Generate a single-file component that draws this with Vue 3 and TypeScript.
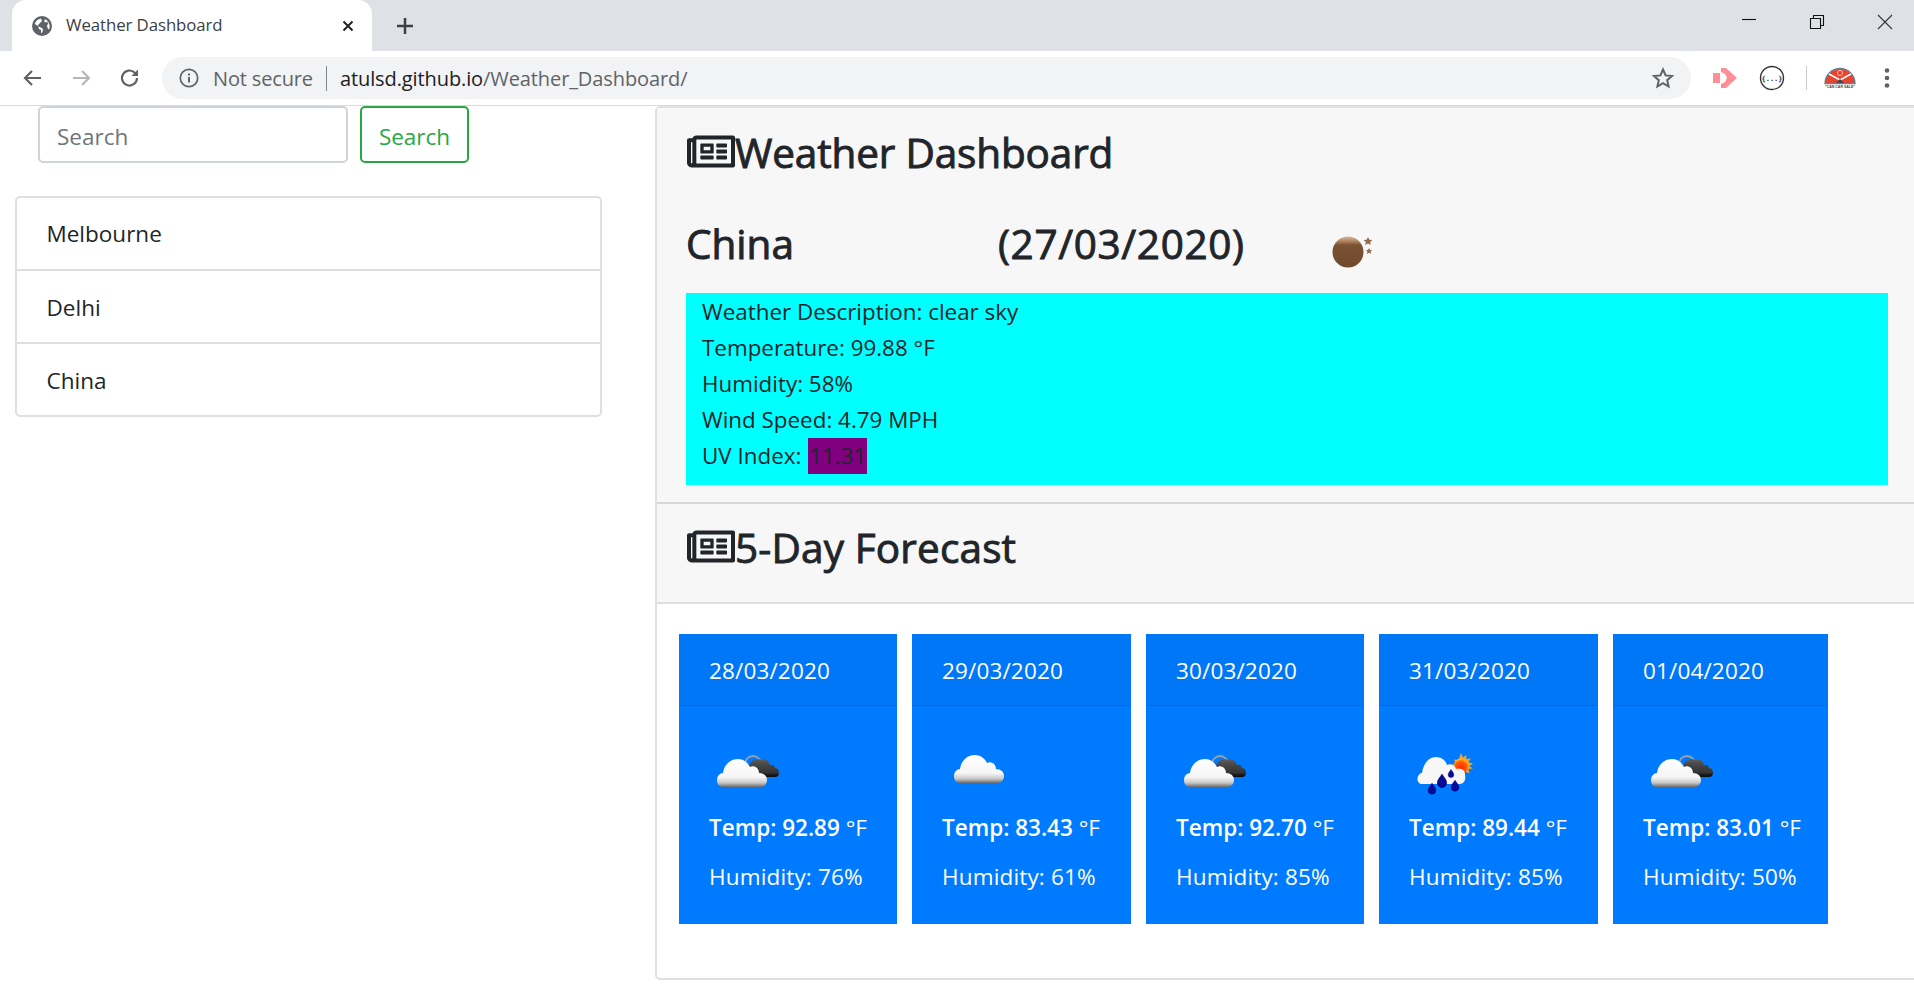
<script setup lang="ts">
interface Day { date: string; temp: string; hum: string; icon: 'broken' | 'cloud' | 'rain'; w: number }
const days: Day[] = [
  { date: '28/03/2020', temp: '92.89', hum: '76', icon: 'broken', w: 218 },
  { date: '29/03/2020', temp: '83.43', hum: '61', icon: 'cloud', w: 219 },
  { date: '30/03/2020', temp: '92.70', hum: '85', icon: 'broken', w: 218 },
  { date: '31/03/2020', temp: '89.44', hum: '85', icon: 'rain', w: 219 },
  { date: '01/04/2020', temp: '83.01', hum: '50', icon: 'broken', w: 215 },
]
const cities: string[] = ['Melbourne', 'Delhi', 'China']
const news = 'M552 64H112c-20.858 0-38.643 13.377-45.248 32H24c-13.255 0-24 10.745-24 24v272c0 30.928 25.072 56 56 56h496c13.255 0 24-10.745 24-24V88c0-13.255-10.745-24-24-24zM48 392V144h16v248c0 4.411-3.589 8-8 8s-8-3.589-8-8zm480 8H111.422c.374-2.614.578-5.283.578-8V112h416v288zM172 280h136c6.627 0 12-5.373 12-12v-96c0-6.627-5.373-12-12-12H172c-6.627 0-12 5.373-12 12v96c0 6.627 5.373 12 12 12zm28-80h80v40h-80v-40zm-40 140v-24c0-6.627 5.373-12 12-12h136c6.627 0 12 5.373 12 12v24c0 6.627-5.373 12-12 12H172c-6.627 0-12-5.373-12-12zm192 0v-24c0-6.627 5.373-12 12-12h104c6.627 0 12 5.373 12 12v24c0 6.627-5.373 12-12 12H364c-6.627 0-12-5.373-12-12zm0-144v-24c0-6.627 5.373-12 12-12h104c6.627 0 12 5.373 12 12v24c0 6.627-5.373 12-12 12H364c-6.627 0-12-5.373-12-12zm0 72v-24c0-6.627 5.373-12 12-12h104c6.627 0 12 5.373 12 12v24c0 6.627-5.373 12-12 12H364c-6.627 0-12-5.373-12-12z'
const cloud = 'M14 51C10 51 8 48 8 44C8 40 11 37 14 37C15 29 21 23 29 23C35 23 39 27 41 31C45 29 50 32 50 37C55 37 58 40 58 44C58 48 55 51 52 51Z'
const dark = 'M40 41C37 38 37 31 41 28C43 23 49 22 52 24C56 22 60 25 61 29C64 28 66 30 66 32C69 32 70 35 70 37C70 40 68 41 66 41Z'
const drop = 'M0-5C2-2 4 0 4 2.500A4 4 0 0 1-4 2.500C-4 0-2-2 0-5Z'
</script>

<template>
  <div class="screen">
    <svg class="defs" width="0" height="0" aria-hidden="true">
      <defs>
        <linearGradient id="white" x1="0" y1="0" x2="0" y2="1">
          <stop offset="0" stop-color="#ffffff" /><stop offset=".65" stop-color="#f6f6f6" />
          <stop offset=".85" stop-color="#c8c8c8" /><stop offset="1" stop-color="#6c6c6c" />
        </linearGradient>
        <linearGradient id="dark" x1="0" y1="0" x2="0" y2="1">
          <stop offset="0" stop-color="#5e5e5e" /><stop offset=".3" stop-color="#484848" />
          <stop offset=".75" stop-color="#343434" /><stop offset="1" stop-color="#050505" />
        </linearGradient>
        <radialGradient id="sun" cx=".5" cy=".6" r=".55">
          <stop offset="0" stop-color="#ff2a00" /><stop offset=".7" stop-color="#ff5a00" /><stop offset="1" stop-color="#ffb020" />
        </radialGradient>
        <linearGradient id="brown" x1="0" y1="0" x2="0" y2="1">
          <stop offset="0" stop-color="#d9b79c" /><stop offset=".14" stop-color="#b28865" />
          <stop offset=".28" stop-color="#7b5232" /><stop offset="1" stop-color="#6e4a2c" />
        </linearGradient>
        <filter id="soft"><feGaussianBlur stdDeviation=".45" /></filter>
      </defs>
    </svg>

    <header class="tabstrip">
      <div class="tab">
        <svg class="globe" viewBox="0 0 20 20" width="20" height="20">
          <circle cx="10" cy="10" r="10" fill="#5f6368" />
          <path d="M9 2.500C6 3 3.500 5 2.800 8L6 10l1 3 2 1v3.400l1.500-1.500.5-3-3-2-2-.5.5-2L8 7l2-2zM13 3.500l-1 2 2 1 1-1 1.500 2.500-1.500 1 .5 3 1.500 1.500c1-2 1.600-6-3-10z" fill="#fff" />
        </svg>
        <span class="tabtitle">Weather Dashboard</span>
        <svg class="tabx" viewBox="0 0 12 12" width="12" height="12"><path d="M1.500 1.500l9 9M10.500 1.500l-9 9" stroke="#202124" stroke-width="2" fill="none" /></svg>
      </div>
      <svg class="plus" viewBox="0 0 18 18" width="18" height="18"><path d="M9 1v16M1 9h16" stroke="#3c4043" stroke-width="2.500" fill="none" /></svg>
      <div class="winbtns">
        <svg viewBox="0 0 16 16" width="16" height="16"><path d="M1 5.500h14" stroke="#111" stroke-width="1.100" fill="none" /></svg>
        <svg viewBox="0 0 16 16" width="16" height="16"><path d="M1.500 4.500h10v10h-10zM4.500 4.500v-3h10v10h-3" stroke="#111" stroke-width="1.100" fill="none" /></svg>
        <svg viewBox="0 0 16 16" width="16" height="16"><path d="M1 1l14 14M15 1L1 15" stroke="#333" stroke-width="1.100" fill="none" /></svg>
      </div>
    </header>

    <nav class="toolbar">
      <svg class="tool" viewBox="0 0 24 24" width="24" height="24"><path d="M20 12H5M11 5l-7 7 7 7" stroke="#5f6368" stroke-width="2.200" fill="none" /></svg>
      <svg class="tool" viewBox="0 0 24 24" width="24" height="24"><path d="M4 12h15M13 5l7 7-7 7" stroke="#b4b6b9" stroke-width="2.200" fill="none" /></svg>
      <svg class="tool reload" viewBox="0 0 24 24" width="24" height="24"><path d="M19 12a7.500 7.500 0 1 1-2.200-5.300L19 9" stroke="#5f6368" stroke-width="2.200" fill="none" /><path d="M20 3.500V10h-6.500z" fill="#5f6368" /></svg>
      <div class="omnibox">
        <svg viewBox="0 0 20 20" width="20" height="20"><circle cx="10" cy="10" r="8.700" stroke="#5f6368" stroke-width="1.700" fill="none" /><path d="M10 9v5.500M10 5.500v2" stroke="#5f6368" stroke-width="2" fill="none" /></svg>
        <span class="secure">Not secure</span>
        <span class="sep"></span>
        <span class="url"><b>atulsd.github.io</b>/Weather_Dashboard/</span>
        <svg class="star" viewBox="0 0 24 24" width="24" height="24"><path d="M12 3.500l2.600 5.900 6.400.6-4.800 4.200 1.400 6.300L12 17.200l-5.600 3.300 1.400-6.300L3 10l6.400-.6z" stroke="#5f6368" stroke-width="2" fill="none" /></svg>
      </div>
      <div class="exts">
        <svg viewBox="0 0 26 22" width="26" height="22"><path d="M1 6h7v10H1zM9 5V1h5l11 10-11 10H9v-4l4-2 2-4-2-4z" fill="#ff8f96" /></svg>
        <svg class="ext2" viewBox="0 0 26 26" width="26" height="26"><circle cx="13" cy="13" r="11.500" stroke="#333" stroke-width="1.400" fill="none" /><text x="13" y="16" text-anchor="middle" class="exttext">{...}</text></svg>
        <span class="extsep"></span>
        <svg class="ext3" viewBox="0 0 32 24" width="32" height="24">
          <path d="M1 18.500a15 15 0 0 1 30 0z" fill="#e8432e" stroke="#68808f" stroke-width="1.400" />
          <path d="M16 15L5 9M16 15l11-6" stroke="#fff" stroke-width="1.500" />
          <circle cx="16" cy="8" r="2.600" fill="#e8432e" stroke="#fff" stroke-width=".6" />
          <path d="M12 18l4-4 4 4z" fill="#3c4a55" />
          <text x="16" y="23" text-anchor="middle" class="cartext">"CAN CAR SALE"</text>
        </svg>
        <svg class="dots" viewBox="0 0 6 22" width="6" height="22"><circle cx="3" cy="3.500" r="2.300" fill="#5f6368" /><circle cx="3" cy="11" r="2.300" fill="#5f6368" /><circle cx="3" cy="18.500" r="2.300" fill="#5f6368" /></svg>
      </div>
    </nav>

    <div class="page">
      <aside class="side">
        <form class="search" @submit.prevent>
          <input class="field" type="text" placeholder="Search" />
          <button class="go" type="submit">Search</button>
        </form>
        <ul class="cities">
          <li v-for="c in cities" :key="c">{{ c }}</li>
        </ul>
      </aside>

      <main class="panel">
        <section class="today">
          <h2 class="title first">
            <svg class="news" viewBox="0 0 576 512" aria-hidden="true"><path :d="news" /></svg>Weather Dashboard
          </h2>
          <h2 class="cityline">
            <span class="cityname">China</span>
            <span class="citydate">(27/03/2020)</span>
            <svg class="moon" viewBox="0 0 44 36" width="44" height="36" aria-hidden="true">
              <circle cx="17" cy="18" r="15.500" fill="url(#brown)" filter="url(#soft)" />
              <path d="M37 3l1.400 2.800 3 .3-2.200 2 .6 3-2.800-1.500-2.800 1.500.6-3-2.200-2 3-.3z" fill="#8f6d52" filter="url(#soft)" />
              <path d="M38 14l1 2 2.200.2-1.600 1.500.5 2.200-2.100-1.100-2.100 1.100.5-2.200-1.600-1.500 2.200-.2z" fill="#8f6d52" filter="url(#soft)" />
            </svg>
          </h2>
          <div class="stats">
            <div>Weather Description: clear sky</div>
            <div>Temperature: 99.88 °F</div>
            <div>Humidity: 58%</div>
            <div>Wind Speed: 4.79 MPH</div>
            <div>UV Index: <span class="uv">11.31</span></div>
          </div>
        </section>

        <section class="forehead">
          <h2 class="title">
            <svg class="news" viewBox="0 0 576 512" aria-hidden="true"><path :d="news" /></svg>5-Day Forecast
          </h2>
        </section>

        <section class="cards">
          <article v-for="d in days" :key="d.date" class="card" :style="{ width: d.w + 'px' }">
            <div class="cardhead">{{ d.date }}</div>
            <div class="cardbody">
              <svg class="wx" viewBox="0 0 75 74" width="75" height="74" aria-hidden="true">
                <g v-if="d.icon === 'broken'" filter="url(#soft)">
                  <circle cx="44" cy="28" r="8" fill="none" stroke="#a0a0a0" stroke-width="1.800" />
                  <path :d="dark" fill="url(#dark)" />
                  <path :d="cloud" fill="url(#white)" />
                </g>
                <g v-else-if="d.icon === 'cloud'" filter="url(#soft)">
                  <path :d="cloud" fill="url(#white)" transform="translate(4 -4)" />
                </g>
                <g v-else>
                  <g filter="url(#soft)">
                    <path d="M52 17l2 4.500 3.500-2.800-.3 4.400 4.800-.6-2.800 3.500L64 28l-4 2 4 2.500-4.800.6 1.500 4.500-4.500-2-1.200 4-2.500-4-3 3-.5-4.500-4.400.3L46 31l-3-2 4-1.500-2-4 4.400.5z" fill="#f7a51e" />
                    <circle cx="52" cy="30" r="7.500" fill="url(#sun)" />
                    <path d="M13 48C10 48 8 45 8.500 42C9 39 11 37 13 37C14 29 19 21 27 21C33 21 37 25 38 29C42 27 46 29 47 33C52 32 56 33 56 39C57 44 55 48 50 48Z" fill="#f7f7f7" />
                  </g>
                  <path :d="drop" fill="#0a0a9a" stroke="#00006a" stroke-width=".6" transform="translate(23 52) scale(.95)" />
                  <path :d="drop" fill="#0a0a9a" stroke="#00006a" stroke-width=".6" transform="translate(33 44) scale(1.150)" />
                  <path :d="drop" fill="#0a0a9a" stroke="#00006a" stroke-width=".6" transform="translate(46 49) scale(.95)" />
                  <path :d="drop" fill="#0a0a9a" stroke="#00006a" stroke-width=".6" transform="translate(42 37) scale(.7)" />
                </g>
              </svg>
              <p class="temp">Temp: {{ d.temp }} <span class="unit">°F</span></p>
              <p class="hum">Humidity: {{ d.hum }}%</p>
            </div>
          </article>
        </section>
      </main>
    </div>
  </div>
</template>

<style>
html, body { margin: 0; padding: 0; background: #fff; overflow: hidden; }
</style>

<style scoped>
.screen { width: 1914px; height: 994px; overflow: hidden; display: flex; flex-direction: column; font-family: "Open Sans", "Noto Sans", sans-serif; color: #212529; }
.defs { position: absolute; }
.tabstrip { height: 51px; flex: none; background: #dee1e6; display: flex; align-items: center; position: relative; }
.tab { margin-left: 12px; width: 360px; height: 51px; box-sizing: border-box; background: #fff; border-radius: 14px 14px 0 0; display: flex; align-items: center; padding: 0 18px 0 20px; }
.globe { flex: none; }
.tabtitle { margin-left: 14px; font-size: 16.800px; color: #3c4043; flex: 1; letter-spacing: -.07px; margin-top: -2px; }
.plus { margin-left: 24px; }
.winbtns { margin-left: auto; display: flex; gap: 52px; padding-right: 21px; align-self: flex-start; padding-top: 14px; }
.toolbar { flex: none; background: #fff; border-bottom: 1px solid #dcdcdc; display: flex; align-items: center; padding-left: 21px; box-sizing: border-box; height: 55px; }
.tool { margin-right: 24px; flex: none; }
.reload { margin-left: 1px; }
.omnibox { margin-left: -4px; width: 1529px; height: 42px; border-radius: 21px; background: #f1f3f4; display: flex; align-items: center; padding: 0 16px 0 17px; box-sizing: border-box; flex: none; }
.secure { margin-left: 14px; font-size: 20px; color: #5f6368; letter-spacing: -.15px; }
.sep { width: 1px; height: 25px; background: #80868b; margin: 0 13px; }
.url { font-size: 20px; color: #5f6368; letter-spacing: -.1px; }
.url b { font-weight: 400; color: #202124; }
.star { margin-left: auto; }
.exts { display: flex; align-items: center; margin-left: 21px; }
.ext2 { margin-left: 21px; }
.exttext { font-size: 7px; fill: #333; font-family: "DejaVu Sans Mono", monospace; font-weight: 700; }
.cartext { font-size: 3.500px; fill: #444; font-family: "Liberation Sans", sans-serif; font-weight: 700; }
.extsep { width: 1px; height: 24px; background: #ccc; margin-left: 21px; }
.ext3 { margin-left: 17px; margin-top: -3px; }
.dots { margin-left: 28px; }
.page { flex: 1; display: flex; align-items: flex-start; min-height: 0; }
.side { width: 655px; flex: none; box-sizing: border-box; }
.search { display: flex; padding-left: 38px; gap: 12px; }
.field { width: 310px; height: 57px; box-sizing: border-box; border: 2px solid #ced4da; border-radius: 5px; padding: 3px 16px 0 17px; font: 22.500px "Open Sans", "Noto Sans", sans-serif; outline: none; background: #fff; color: #495057; }
.field::placeholder { color: #6c757d; opacity: 1; }
.go { width: 109px; height: 57px; box-sizing: border-box; border: 2px solid #28a745; border-radius: 5px; background: #fff; color: #28a745; font: 22.500px "Open Sans", "Noto Sans", sans-serif; padding: 3px 0 0; }
.cities { list-style: none; margin: 33px 0 0 15px; padding: 0; width: 587px; box-sizing: border-box; border: 2px solid #dedfe0; border-radius: 5px; }
.cities li { height: 71px; box-sizing: border-box; padding: 0 30px 0 29.500px; display: flex; align-items: center; font-size: 22.500px; color: #212529; }
.cities li + li { border-top: 2px solid #dedfe0; height: 73px; padding-top: 1px; }
.panel { width: 1271px; height: 874px; flex: none; box-sizing: border-box; border: 2px solid #e0e0e0; border-radius: 5px; background: #fff; }
.today { background: #f7f7f7; padding: 0 24px 15px 29px; border-bottom: 2px solid #d8d8d8; height: 396px; box-sizing: border-box; }
.title { margin: 0; font-size: 40.500px; font-weight: 400; -webkit-text-stroke: .9px #212529; line-height: 74px; display: flex; align-items: center; letter-spacing: -.05px; color: #212529; }
.title.first { padding-top: 8px; letter-spacing: -.15px; }
.forehead .title { letter-spacing: .15px; }
.news { width: 48px; height: 43px; fill: #212529; flex: none; margin: -3px 0 0 1px; }
.cityline { margin: 25px 0 0; font-size: 40.500px; font-weight: 400; -webkit-text-stroke: .9px #212529; line-height: 58px; display: flex; align-items: center; letter-spacing: 0; }
.cityname { width: 312px; flex: none; }
.citydate { width: 333px; flex: none; letter-spacing: .65px; }
.moon { margin-top: 15px; }
.stats { margin: 20px 0 0 0; width: 1202px; height: 192px; box-sizing: border-box; padding: 1px 16px 0; background: #0ff; font-size: 22.400px; line-height: 36px; }
.uv { background: #800080; display: inline-block; padding: 0 1px; margin-left: 1px; }
.forehead { background: #f7f7f7; padding: 0 24px 0 29px; height: 100px; box-sizing: border-box; border-bottom: 2px solid #dedede; display: flex; align-items: center; }
.forehead .title { margin-top: -11px; }
.cards { padding: 30px 0 0 22px; display: flex; gap: 15px; }
.card { flex: none; height: 290px; background: #007bff; color: #fff; font-size: 22.500px; line-height: 36px; letter-spacing: .15px; }
.cardhead { height: 72px; box-sizing: border-box; padding: 19px 30px 0; background: rgba(0, 0, 0, .03); border-bottom: 1px solid rgba(0, 0, 0, .125); }
.cardbody { padding: 30px 30px 0; }
.wx { display: block; }
.temp { margin: 0 0 13px; font-weight: 600; white-space: nowrap; letter-spacing: 0; }
.unit { font-weight: 400; font-size: 22.500px; }
.hum { margin: 0; }
</style>
